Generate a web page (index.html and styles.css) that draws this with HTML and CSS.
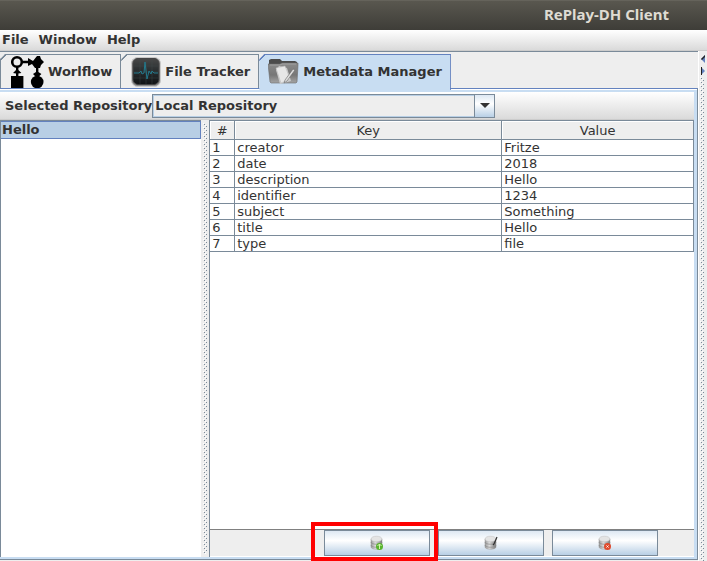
FILE: index.html
```html
<!DOCTYPE html>
<html lang="en">
<head>
<meta charset="utf-8">
<title>RePlay-DH Client</title>
<link rel="stylesheet" href="styles.css">
</head>
<body>
<header class="titlebar"><h1>RePlay-DH Client</h1></header>
<nav class="menubar">
  <button type="button">File</button>
  <button type="button">Window</button>
  <button type="button">Help</button>
</nav>
<div class="workspace">
  <main class="main">
    <div class="tabs" role="tablist">
      <button class="tab tab-workflow" type="button" role="tab">
        <svg width="34" height="34" viewBox="0 0 34 34" aria-hidden="true">
          <circle cx="7" cy="7" r="4.800" fill="none" stroke="#000" stroke-width="2.600"/>
          <path d="M12 5.800h6V3l5 3 4-5h3l1 3 3 3-3 3-1 3h-5l-3-4-4 2V8.200h-6z"/>
          <path d="M6 12h2.400v3l3 3-3 .5V21h5v12H1V21h5v-2.500L3 18l3-3z"/>
          <path d="M26 12h2.400v5l3 2-3 3h-2.400l-3-3 3-2z"/>
          <circle cx="27.200" cy="27" r="6.300"/>
        </svg>
        <span>Worlflow</span>
      </button>
      <button class="tab tab-tracker" type="button" role="tab">
        <svg width="30" height="30" viewBox="0 0 30 30" aria-hidden="true">
          <defs><linearGradient id="screen" x2="0" y2="1"><stop stop-color="#484848"/><stop offset=".5" stop-color="#272c2e"/><stop offset="1" stop-color="#101214"/></linearGradient></defs>
          <rect x=".5" y=".5" width="29" height="29" rx="6" fill="#8c8c8c" stroke="#c8c8c8"/>
          <rect x="2" y="1.500" width="26" height="26" rx="5" fill="url(#screen)" stroke="#444"/>
          <path d="M3 9h24M3 15h24M3 21h24M9 3v24M15 3v24M21 3v24" stroke="#444b4e" stroke-width=".4"/>
          <path d="M3 16h5l2-2 1 3 2-1 1-11 2 17 2-8 2 3 1-3 2 2h4" fill="none" stroke="#23798c"/>
        </svg>
        <span>File Tracker</span>
      </button>
      <button class="tab tab-metadata active" type="button" role="tab" aria-selected="true">
        <svg width="31" height="27" viewBox="0 0 31 27" aria-hidden="true">
          <defs><linearGradient id="folder" x2="0" y2="1"><stop stop-color="#8b8b8b"/><stop offset=".6" stop-color="#777"/><stop offset="1" stop-color="#a5a5a5"/></linearGradient></defs>
          <path d="M1 8V2l2-1h9l2 2h13l2 1v5z" fill="#4b4b4b"/>
          <path d="M0 6h12l2-1h16v2l-1 17-1 1H3l-1-1z" fill="url(#folder)" stroke="#696969" stroke-width=".6"/>
          <path d="M2 7h10l2-1h14" fill="none" stroke="#b3b3b3" stroke-width=".6"/>
          <path d="M8 12l3-4 8 2 4 13-11 3z" fill="#ccc"/>
          <path d="M8 10l9-2 5 13-9 4z" fill="#e7e7e7" stroke="#bbb" stroke-width=".5"/>
          <path d="M25 11L17 22l-1 3 3-2 8-11z" fill="#ddd" stroke="#666" stroke-width=".6"/>
        </svg>
        <span>Metadata Manager</span>
      </button>
    </div>
    <section class="panel">
      <div class="toolbar">
        <label for="repository">Selected Repository</label>
        <div class="combo">
          <select id="repository"><option>Local Repository</option></select>
          <span class="combo-arrow"><svg width="10" height="5" viewBox="0 0 10 5" aria-hidden="true"><path d="M0 0h10L5 5z" fill="#333"/></svg></span>
        </div>
      </div>
      <div class="split">
        <ul class="records"><li>Hello</li></ul>
        <div class="grip">
          <svg width="5" height="100%" aria-hidden="true">
            <defs><pattern id="dots" width="5" height="4" patternUnits="userSpaceOnUse"><path d="M0 0h1v1H0zM2 2h1v1H2z" fill="#fff"/><path d="M1 1h1v1H1zM3 3h1v1H3z" fill="#7a8a99"/></pattern></defs>
            <rect width="5" height="100%" fill="url(#dots)"/>
          </svg>
        </div>
        <div class="details">
          <div class="scroll">
            <table>
              <thead><tr><th class="col-number">#</th><th class="col-key">Key</th><th>Value</th></tr></thead>
              <tbody>
                <tr><td>1</td><td>creator</td><td>Fritze</td></tr>
                <tr><td>2</td><td>date</td><td>2018</td></tr>
                <tr><td>3</td><td>description</td><td>Hello</td></tr>
                <tr><td>4</td><td>identifier</td><td>1234</td></tr>
                <tr><td>5</td><td>subject</td><td>Something</td></tr>
                <tr><td>6</td><td>title</td><td>Hello</td></tr>
                <tr><td>7</td><td>type</td><td>file</td></tr>
              </tbody>
            </table>
          </div>
          <div class="actions">
            <div class="highlighted">
              <button type="button" aria-label="Add">
                <svg width="14" height="16" viewBox="0 0 14 16" aria-hidden="true">
                  <defs><linearGradient id="metal"><stop stop-color="#999"/><stop offset=".4" stop-color="#ddd"/><stop offset="1" stop-color="#777"/></linearGradient></defs>
                  <path d="M1 4v8c0 3 11 3 11 0V4z" fill="url(#metal)" stroke="#999" stroke-width=".5"/>
                  <path d="M1 7c0 3 11 3 11 0M1 10c0 3 11 3 11 0" fill="none" stroke="#888" stroke-width=".7"/>
                  <ellipse cx="6.500" cy="4" rx="5.500" ry="2.800" fill="#e4e4e4" stroke="#bbb" stroke-width=".5"/>
                  <circle cx="9.500" cy="11.500" r="3.500" fill="#58b42d"/><path d="M9.500 9v5M7.500 11l2-2 2 2" fill="none" stroke="#d5f5b0"/>
                </svg>
              </button>
            </div>
            <button type="button" aria-label="Edit">
              <svg width="14" height="16" viewBox="0 0 14 16" aria-hidden="true">
                <path d="M1 4v8c0 3 11 3 11 0V4z" fill="url(#metal)" stroke="#999" stroke-width=".5"/>
                <path d="M1 7c0 3 11 3 11 0M1 10c0 3 11 3 11 0" fill="none" stroke="#888" stroke-width=".7"/>
                <ellipse cx="6.500" cy="4" rx="5.500" ry="2.800" fill="#e4e4e4" stroke="#bbb" stroke-width=".5"/>
                <path d="M13 2l-3 7-1 1" fill="none" stroke="#333" stroke-width="1.200"/>
              </svg>
            </button>
            <button type="button" aria-label="Remove">
              <svg width="14" height="16" viewBox="0 0 14 16" aria-hidden="true">
                <path d="M1 4v8c0 3 11 3 11 0V4z" fill="url(#metal)" stroke="#999" stroke-width=".5"/>
                <path d="M1 7c0 3 11 3 11 0M1 10c0 3 11 3 11 0" fill="none" stroke="#888" stroke-width=".7"/>
                <ellipse cx="6.500" cy="4" rx="5.500" ry="2.800" fill="#e4e4e4" stroke="#bbb" stroke-width=".5"/>
                <circle cx="9.500" cy="11.500" r="3.500" fill="#e14b2d"/><path d="M8.500 10.500l2 2m0-2l-2 2" stroke="#fff"/>
              </svg>
            </button>
          </div>
        </div>
      </div>
    </section>
  </main>
  <aside class="side-grip">
    <svg class="arrows" width="6" height="22" viewBox="0 0 6 22" aria-hidden="true">
      <path d="M5 0v8L1 4z" fill="#6382bf"/><path d="M5 0L1 4l1 1 3-3z" fill="#222"/>
      <path d="M1 12v8l4-4z" fill="#6382bf"/><path d="M1 12h1v8H1z" fill="#222"/>
    </svg>
    <svg class="dots" width="5" height="100%" aria-hidden="true"><rect width="5" height="100%" fill="url(#dots)"/></svg>
  </aside>
</div>
</body>
</html>
```
FILE: styles.css
```css
* {
  box-sizing: border-box;
}

body {
  margin: 0;
  min-height: 100vh;
  display: flex;
  flex-direction: column;
  background: #eee;
  color: #333;
  font: 13px/16px "DejaVu Sans", sans-serif;
}

button,
select {
  margin: 0;
  padding: 0;
  border: 0;
  border-radius: 0;
  background: none;
  color: inherit;
  font: inherit;
}

svg {
  display: block;
  flex: none;
}

.titlebar {
  height: 30px;
  padding-right: 38px;
  border-top: 1px solid #65635b;
  background: linear-gradient(#59574f, #3e3d38);
  text-align: right;
}

.titlebar h1 {
  margin: 0;
  color: #dfdbd2;
  font: bold 15px/26px "Noto Sans", sans-serif;
}

.menubar {
  display: flex;
  gap: 10px;
  height: 21px;
  padding: 0 2px 1px;
  border-bottom: 1px solid #ccc;
  background: linear-gradient(#fff, #dadada);
  font-weight: bold;
}

.workspace {
  flex: 1;
  display: flex;
}

.main {
  flex: 1;
  min-width: 0;
  display: flex;
  flex-direction: column;
  border-top: 1px solid #7a8a99;
}

.tabs {
  display: flex;
  height: 36px;
  padding-top: 2px;
}

.tab {
  display: flex;
  align-items: center;
  gap: 4px;
  padding: 0 8px 0 9px;
  border: 1px solid #7a8a99;
  border-width: 1px 1px 0 0;
  background: linear-gradient(135deg, #eee 3px, #7a8a99 4px, #7a8a99 5px, #eee 5px) border-box;
  clip-path: polygon(5px 0, 100% 0, 100% 100%, 0 100%, 0 5px);
  font-weight: bold;
}

.tab-workflow {
  border-left-width: 1px;
}

.tab-tracker {
  padding-left: 10px;
}

.tab.active {
  position: relative;
  margin-bottom: -2px;
  padding-bottom: 2px;
  border-color: #6382bf;
  background: linear-gradient(135deg, #eee 3px, #6382bf 4px, #6382bf 5px, #c8ddf2 5px) border-box;
}

.panel {
  flex: 1;
  display: flex;
  flex-direction: column;
  margin-bottom: 1px;
  border: 1px solid #7a8a99;
  border-top-color: #6382bf;
  border-left: 0;
  box-shadow: inset 0 1px #fff;
  padding: 3px 3px 2px 0;
  background: #c8ddf2;
}

.toolbar {
  display: flex;
  align-items: center;
  height: 28px;
  padding-left: 5px;
  border-bottom: 1px solid #ccc;
  background: linear-gradient(#fff, #dadada);
  font-weight: bold;
}

.combo {
  display: grid;
  grid-template-columns: 1fr 20px;
  flex: 0 1 343px;
  height: 24px;
  border: 1px solid #7a8a99;
  background: #eee;
}

.combo select {
  grid-area: 1 / 1 / 2 / 3;
  appearance: none;
  padding: 0 22px 0 1px;
  border: 1px solid #b8cfe5;
}

.combo-arrow {
  grid-area: 1 / 2;
  display: grid;
  place-items: center;
  border-left: 1px solid #7a8a99;
  background: linear-gradient(#dde8f3, #fff 40%, #b8cfe5);
  pointer-events: none;
}

.split {
  flex: 1;
  display: flex;
  background: #eee;
}

.records {
  flex: 0 0 29%;
  margin: 0;
  padding: 0;
  border: 1px solid #7a8a99;
  border-width: 1px 0 0 1px;
  background: #fff;
  list-style: none;
  font-weight: bold;
}

.records li {
  padding-left: 1px;
  border: 1px solid #6382bf;
  border-left: 0;
  background: #b8cfe5;
}

.grip {
  flex: 0 0 8px;
  display: flex;
  padding: 3px 0 3px 2px;
}

.details {
  flex: 1;
  min-width: 0;
  display: flex;
  flex-direction: column;
  border: 1px solid #7a8a99;
  border-width: 1px 0 0 1px;
}

.scroll {
  flex: 1;
  border-bottom: 1px solid #808080;
  background: #fff;
}

table {
  width: 100%;
  table-layout: fixed;
  border-collapse: separate;
  border-spacing: 0;
}

th,
td {
  height: 16px;
  padding: 0 2px;
  border: 1px solid #7a8a99;
  border-width: 0 1px 1px 0;
  line-height: 15px;
  text-align: left;
}

th {
  height: 19px;
  background: #eee;
  box-shadow: inset 1px 1px #fff;
  font-weight: normal;
  text-align: center;
}

.col-number {
  width: 25px;
}

.col-key {
  width: 267px;
}

.actions {
  display: flex;
  justify-content: flex-end;
  gap: 8px;
  padding: 0 36px 0 0;
  border-bottom: 1px solid #fff;
}

.actions button {
  display: grid;
  place-items: center;
  width: 106px;
  height: 26px;
  border: 1px solid #7a8a99;
  background: linear-gradient(#dde8f3, #fff 40%, #b8cfe5);
}

.highlighted {
  position: relative;
}

.highlighted::after {
  content: "";
  position: absolute;
  z-index: 1;
  inset: -8px -8px -5px -13px;
  border: 4px solid #f00;
  pointer-events: none;
}

.side-grip {
  flex: 0 0 9px;
  display: flex;
  flex-direction: column;
  padding: 4px 0 0 1px;
  border-left: 1px solid #fff;
}

.side-grip .dots {
  flex: 1;
  height: auto;
}
```
